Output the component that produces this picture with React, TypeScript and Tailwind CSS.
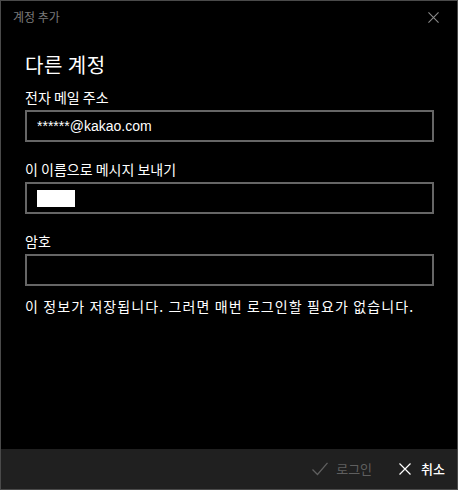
import React from 'react';

const ko = '"Noto Sans CJK KR", "Noto Sans", sans-serif';

function CloseGlyph({ className }: { className?: string }) {
  return (
    <svg viewBox="0 0 12 12" className={className} fill="none" stroke="currentColor" strokeWidth="1.2">
      <path d="M0.5 0.5 L11.5 11.5 M11.5 0.5 L0.5 11.5" />
    </svg>
  );
}

function CheckGlyph({ className }: { className?: string }) {
  return (
    <svg viewBox="0 0 16 14" className={className} fill="none" stroke="currentColor" strokeWidth="1.3">
      <path d="M0.5 7.5 L5.5 12.5 L15.5 0.8" />
    </svg>
  );
}

function Field({ label, children }: { label: string; children?: React.ReactNode }) {
  return (
    <div className="flex flex-col">
      <div className="h-[20px] leading-[20px] text-[14px] text-white">{label}</div>
      <div className="mt-[3px] h-[32px] w-full border-2 border-[#666666] flex items-center px-[10px]">
        {children}
      </div>
    </div>
  );
}

export default function App() {
  return (
    <div
      className="w-[458px] h-[490px] bg-black border border-[#4a4a4a] flex flex-col"
      style={{ fontFamily: ko }}
    >
      {/* title bar */}
      <div className="h-[32px] flex items-center justify-between pl-[12px] pr-[18px]">
        <span className="text-[12px] text-[#7a7a7a]">계정 추가</span>
        <CloseGlyph className="w-[11px] h-[11px] text-[#8a8a8a]" />
      </div>

      <div className="pl-[24px] pr-[23px] flex flex-col">
        <h1 className="mt-[18px] h-[28px] leading-[28px] text-[20px] tracking-[0.5px] text-white font-normal">다른 계정</h1>

        <div className="mt-[8px] flex flex-col gap-[17px]">
          <Field label="전자 메일 주소">
            <span className="text-[14px] text-white" style={{ fontFamily: '"Liberation Sans", Arial, sans-serif' }}>
              ******@kakao.com
            </span>
          </Field>
          <Field label="이 이름으로 메시지 보내기">
            <div className="w-[38px] h-[17px] bg-white" />
          </Field>
          <Field label="암호" />
        </div>

        <p className="mt-[10px] h-[20px] leading-[20px] text-[14px] tracking-[1.1px] text-white whitespace-nowrap">
          이 정보가 저장됩니다. 그러면 매번 로그인할 필요가 없습니다.
        </p>
      </div>

      <div className="flex-1" />

      {/* command bar */}
      <div className="h-[40px] bg-[#202020] flex items-center justify-end pr-[12px]">
        <div className="flex items-center gap-[8px] text-[#5f5f5f]">
          <CheckGlyph className="w-[16px] h-[14px]" />
          <span className="text-[13px]">로그인</span>
        </div>
        <div className="ml-[27px] flex items-center gap-[10px] text-white">
          <CloseGlyph className="w-[12px] h-[12px]" />
          <span className="text-[13px] font-medium">취소</span>
        </div>
      </div>
    </div>
  );
}
